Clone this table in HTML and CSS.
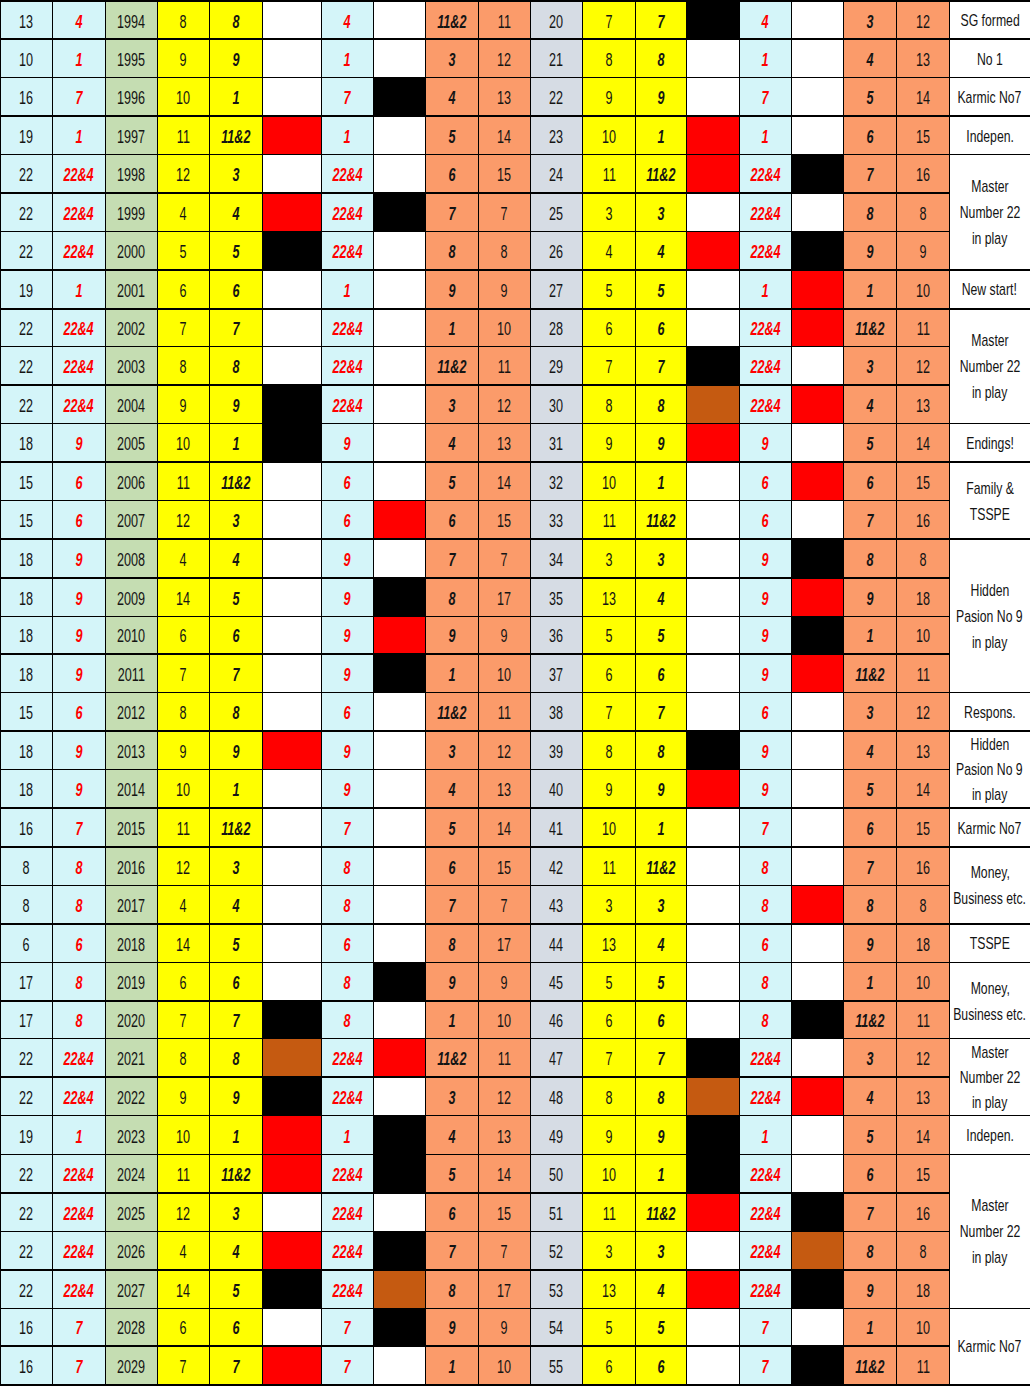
FILE: index.html
```html
<!DOCTYPE html>
<html>
<head>
<meta charset="utf-8">
<title>Numbers sheet</title>
<link rel="stylesheet" href="styles.css">
</head>
<body>
<table class="sheet">
<colgroup>
<col style="width:52px"><col style="width:53px"><col style="width:52px"><col style="width:52px"><col style="width:53px"><col style="width:59px"><col style="width:52px"><col style="width:52px"><col style="width:53px"><col style="width:52px"><col style="width:52px"><col style="width:53px"><col style="width:51px"><col style="width:53px"><col style="width:52px"><col style="width:52px"><col style="width:53px"><col style="width:53px"><col style="width:81px">
</colgroup>
<tbody>
<tr><td><span>13</span></td><td><span>4</span></td><td><span>1994</span></td><td><span>8</span></td><td><span>8</span></td><td></td><td><span>4</span></td><td></td><td><span>11&amp;2</span></td><td><span>11</span></td><td><span>20</span></td><td><span>7</span></td><td><span>7</span></td><td class="k"></td><td><span>4</span></td><td></td><td><span>3</span></td><td><span>12</span></td><td class="n"><div class="nt"><span>SG formed</span></div></td></tr>
<tr class="tk"><td><span>10</span></td><td><span>1</span></td><td><span>1995</span></td><td><span>9</span></td><td><span>9</span></td><td></td><td><span>1</span></td><td></td><td><span>3</span></td><td><span>12</span></td><td><span>21</span></td><td><span>8</span></td><td><span>8</span></td><td></td><td><span>1</span></td><td></td><td><span>4</span></td><td><span>13</span></td><td class="n"><div class="nt"><span>No 1</span></div></td></tr>
<tr><td><span>16</span></td><td><span>7</span></td><td><span>1996</span></td><td><span>10</span></td><td><span>1</span></td><td></td><td><span>7</span></td><td class="k"></td><td><span>4</span></td><td><span>13</span></td><td><span>22</span></td><td><span>9</span></td><td><span>9</span></td><td></td><td><span>7</span></td><td></td><td><span>5</span></td><td><span>14</span></td><td class="n"><div class="nt"><span>Karmic No7</span></div></td></tr>
<tr class="tk"><td><span>19</span></td><td><span>1</span></td><td><span>1997</span></td><td><span>11</span></td><td><span>11&amp;2</span></td><td class="rd"></td><td><span>1</span></td><td></td><td><span>5</span></td><td><span>14</span></td><td><span>23</span></td><td><span>10</span></td><td><span>1</span></td><td class="rd"></td><td><span>1</span></td><td></td><td><span>6</span></td><td><span>15</span></td><td class="n"><div class="nt"><span>Indepen.</span></div></td></tr>
<tr><td><span>22</span></td><td><span>22&amp;4</span></td><td><span>1998</span></td><td><span>12</span></td><td><span>3</span></td><td></td><td><span>22&amp;4</span></td><td></td><td><span>6</span></td><td><span>15</span></td><td><span>24</span></td><td><span>11</span></td><td><span>11&amp;2</span></td><td class="rd"></td><td><span>22&amp;4</span></td><td class="k"></td><td><span>7</span></td><td><span>16</span></td><td class="n" rowspan="3"><div class="nt"><span>Master</span><span>Number 22</span><span>in play</span></div></td></tr>
<tr class="tk"><td><span>22</span></td><td><span>22&amp;4</span></td><td><span>1999</span></td><td><span>4</span></td><td><span>4</span></td><td class="rd"></td><td><span>22&amp;4</span></td><td class="k"></td><td><span>7</span></td><td><span>7</span></td><td><span>25</span></td><td><span>3</span></td><td><span>3</span></td><td></td><td><span>22&amp;4</span></td><td></td><td><span>8</span></td><td><span>8</span></td></tr>
<tr><td><span>22</span></td><td><span>22&amp;4</span></td><td><span>2000</span></td><td><span>5</span></td><td><span>5</span></td><td class="k"></td><td><span>22&amp;4</span></td><td></td><td><span>8</span></td><td><span>8</span></td><td><span>26</span></td><td><span>4</span></td><td><span>4</span></td><td class="rd"></td><td><span>22&amp;4</span></td><td class="k"></td><td><span>9</span></td><td><span>9</span></td></tr>
<tr class="tk"><td><span>19</span></td><td><span>1</span></td><td><span>2001</span></td><td><span>6</span></td><td><span>6</span></td><td></td><td><span>1</span></td><td></td><td><span>9</span></td><td><span>9</span></td><td><span>27</span></td><td><span>5</span></td><td><span>5</span></td><td></td><td><span>1</span></td><td class="rd"></td><td><span>1</span></td><td><span>10</span></td><td class="n"><div class="nt"><span>New start!</span></div></td></tr>
<tr class="tk"><td><span>22</span></td><td><span>22&amp;4</span></td><td><span>2002</span></td><td><span>7</span></td><td><span>7</span></td><td></td><td><span>22&amp;4</span></td><td></td><td><span>1</span></td><td><span>10</span></td><td><span>28</span></td><td><span>6</span></td><td><span>6</span></td><td></td><td><span>22&amp;4</span></td><td class="rd"></td><td><span>11&amp;2</span></td><td><span>11</span></td><td class="n" rowspan="3"><div class="nt"><span>Master</span><span>Number 22</span><span>in play</span></div></td></tr>
<tr><td><span>22</span></td><td><span>22&amp;4</span></td><td><span>2003</span></td><td><span>8</span></td><td><span>8</span></td><td></td><td><span>22&amp;4</span></td><td></td><td><span>11&amp;2</span></td><td><span>11</span></td><td><span>29</span></td><td><span>7</span></td><td><span>7</span></td><td class="k"></td><td><span>22&amp;4</span></td><td></td><td><span>3</span></td><td><span>12</span></td></tr>
<tr class="tk"><td><span>22</span></td><td><span>22&amp;4</span></td><td><span>2004</span></td><td><span>9</span></td><td><span>9</span></td><td class="k"></td><td><span>22&amp;4</span></td><td></td><td><span>3</span></td><td><span>12</span></td><td><span>30</span></td><td><span>8</span></td><td><span>8</span></td><td class="bn"></td><td><span>22&amp;4</span></td><td class="rd"></td><td><span>4</span></td><td><span>13</span></td></tr>
<tr><td><span>18</span></td><td><span>9</span></td><td><span>2005</span></td><td><span>10</span></td><td><span>1</span></td><td class="k"></td><td><span>9</span></td><td></td><td><span>4</span></td><td><span>13</span></td><td><span>31</span></td><td><span>9</span></td><td><span>9</span></td><td class="rd"></td><td><span>9</span></td><td></td><td><span>5</span></td><td><span>14</span></td><td class="n"><div class="nt"><span>Endings!</span></div></td></tr>
<tr class="tk"><td><span>15</span></td><td><span>6</span></td><td><span>2006</span></td><td><span>11</span></td><td><span>11&amp;2</span></td><td></td><td><span>6</span></td><td></td><td><span>5</span></td><td><span>14</span></td><td><span>32</span></td><td><span>10</span></td><td><span>1</span></td><td></td><td><span>6</span></td><td class="rd"></td><td><span>6</span></td><td><span>15</span></td><td class="n" rowspan="2"><div class="nt"><span>Family &amp;</span><span>TSSPE</span></div></td></tr>
<tr><td><span>15</span></td><td><span>6</span></td><td><span>2007</span></td><td><span>12</span></td><td><span>3</span></td><td></td><td><span>6</span></td><td class="rd"></td><td><span>6</span></td><td><span>15</span></td><td><span>33</span></td><td><span>11</span></td><td><span>11&amp;2</span></td><td></td><td><span>6</span></td><td></td><td><span>7</span></td><td><span>16</span></td></tr>
<tr class="tk"><td><span>18</span></td><td><span>9</span></td><td><span>2008</span></td><td><span>4</span></td><td><span>4</span></td><td></td><td><span>9</span></td><td></td><td><span>7</span></td><td><span>7</span></td><td><span>34</span></td><td><span>3</span></td><td><span>3</span></td><td></td><td><span>9</span></td><td class="k"></td><td><span>8</span></td><td><span>8</span></td><td class="n" rowspan="4"><div class="nt"><span>Hidden</span><span>Pasion No 9</span><span>in play</span></div></td></tr>
<tr class="tk"><td><span>18</span></td><td><span>9</span></td><td><span>2009</span></td><td><span>14</span></td><td><span>5</span></td><td></td><td><span>9</span></td><td class="k"></td><td><span>8</span></td><td><span>17</span></td><td><span>35</span></td><td><span>13</span></td><td><span>4</span></td><td></td><td><span>9</span></td><td class="rd"></td><td><span>9</span></td><td><span>18</span></td></tr>
<tr><td><span>18</span></td><td><span>9</span></td><td><span>2010</span></td><td><span>6</span></td><td><span>6</span></td><td></td><td><span>9</span></td><td class="rd"></td><td><span>9</span></td><td><span>9</span></td><td><span>36</span></td><td><span>5</span></td><td><span>5</span></td><td></td><td><span>9</span></td><td class="k"></td><td><span>1</span></td><td><span>10</span></td></tr>
<tr class="tk"><td><span>18</span></td><td><span>9</span></td><td><span>2011</span></td><td><span>7</span></td><td><span>7</span></td><td></td><td><span>9</span></td><td class="k"></td><td><span>1</span></td><td><span>10</span></td><td><span>37</span></td><td><span>6</span></td><td><span>6</span></td><td></td><td><span>9</span></td><td class="rd"></td><td><span>11&amp;2</span></td><td><span>11</span></td></tr>
<tr><td><span>15</span></td><td><span>6</span></td><td><span>2012</span></td><td><span>8</span></td><td><span>8</span></td><td></td><td><span>6</span></td><td></td><td><span>11&amp;2</span></td><td><span>11</span></td><td><span>38</span></td><td><span>7</span></td><td><span>7</span></td><td></td><td><span>6</span></td><td></td><td><span>3</span></td><td><span>12</span></td><td class="n"><div class="nt"><span>Respons.</span></div></td></tr>
<tr class="tk"><td><span>18</span></td><td><span>9</span></td><td><span>2013</span></td><td><span>9</span></td><td><span>9</span></td><td class="rd"></td><td><span>9</span></td><td></td><td><span>3</span></td><td><span>12</span></td><td><span>39</span></td><td><span>8</span></td><td><span>8</span></td><td class="k"></td><td><span>9</span></td><td></td><td><span>4</span></td><td><span>13</span></td><td class="n tight" rowspan="2"><div class="nt"><span>Hidden</span><span>Pasion No 9</span><span>in play</span></div></td></tr>
<tr><td><span>18</span></td><td><span>9</span></td><td><span>2014</span></td><td><span>10</span></td><td><span>1</span></td><td></td><td><span>9</span></td><td></td><td><span>4</span></td><td><span>13</span></td><td><span>40</span></td><td><span>9</span></td><td><span>9</span></td><td class="rd"></td><td><span>9</span></td><td></td><td><span>5</span></td><td><span>14</span></td></tr>
<tr class="tk"><td><span>16</span></td><td><span>7</span></td><td><span>2015</span></td><td><span>11</span></td><td><span>11&amp;2</span></td><td></td><td><span>7</span></td><td></td><td><span>5</span></td><td><span>14</span></td><td><span>41</span></td><td><span>10</span></td><td><span>1</span></td><td></td><td><span>7</span></td><td></td><td><span>6</span></td><td><span>15</span></td><td class="n"><div class="nt"><span>Karmic No7</span></div></td></tr>
<tr class="tk"><td><span>8</span></td><td><span>8</span></td><td><span>2016</span></td><td><span>12</span></td><td><span>3</span></td><td></td><td><span>8</span></td><td></td><td><span>6</span></td><td><span>15</span></td><td><span>42</span></td><td><span>11</span></td><td><span>11&amp;2</span></td><td></td><td><span>8</span></td><td></td><td><span>7</span></td><td><span>16</span></td><td class="n" rowspan="2"><div class="nt"><span>Money,</span><span>Business etc.</span></div></td></tr>
<tr><td><span>8</span></td><td><span>8</span></td><td><span>2017</span></td><td><span>4</span></td><td><span>4</span></td><td></td><td><span>8</span></td><td></td><td><span>7</span></td><td><span>7</span></td><td><span>43</span></td><td><span>3</span></td><td><span>3</span></td><td></td><td><span>8</span></td><td class="rd"></td><td><span>8</span></td><td><span>8</span></td></tr>
<tr class="tk"><td><span>6</span></td><td><span>6</span></td><td><span>2018</span></td><td><span>14</span></td><td><span>5</span></td><td></td><td><span>6</span></td><td></td><td><span>8</span></td><td><span>17</span></td><td><span>44</span></td><td><span>13</span></td><td><span>4</span></td><td></td><td><span>6</span></td><td></td><td><span>9</span></td><td><span>18</span></td><td class="n"><div class="nt"><span>TSSPE</span></div></td></tr>
<tr><td><span>17</span></td><td><span>8</span></td><td><span>2019</span></td><td><span>6</span></td><td><span>6</span></td><td></td><td><span>8</span></td><td class="k"></td><td><span>9</span></td><td><span>9</span></td><td><span>45</span></td><td><span>5</span></td><td><span>5</span></td><td></td><td><span>8</span></td><td></td><td><span>1</span></td><td><span>10</span></td><td class="n" rowspan="2"><div class="nt"><span>Money,</span><span>Business etc.</span></div></td></tr>
<tr class="tk"><td><span>17</span></td><td><span>8</span></td><td><span>2020</span></td><td><span>7</span></td><td><span>7</span></td><td class="k"></td><td><span>8</span></td><td></td><td><span>1</span></td><td><span>10</span></td><td><span>46</span></td><td><span>6</span></td><td><span>6</span></td><td></td><td><span>8</span></td><td class="k"></td><td><span>11&amp;2</span></td><td><span>11</span></td></tr>
<tr><td><span>22</span></td><td><span>22&amp;4</span></td><td><span>2021</span></td><td><span>8</span></td><td><span>8</span></td><td class="bn"></td><td><span>22&amp;4</span></td><td class="rd"></td><td><span>11&amp;2</span></td><td><span>11</span></td><td><span>47</span></td><td><span>7</span></td><td><span>7</span></td><td class="k"></td><td><span>22&amp;4</span></td><td></td><td><span>3</span></td><td><span>12</span></td><td class="n tight" rowspan="2"><div class="nt"><span>Master</span><span>Number 22</span><span>in play</span></div></td></tr>
<tr class="tk"><td><span>22</span></td><td><span>22&amp;4</span></td><td><span>2022</span></td><td><span>9</span></td><td><span>9</span></td><td class="k"></td><td><span>22&amp;4</span></td><td></td><td><span>3</span></td><td><span>12</span></td><td><span>48</span></td><td><span>8</span></td><td><span>8</span></td><td class="bn"></td><td><span>22&amp;4</span></td><td class="rd"></td><td><span>4</span></td><td><span>13</span></td></tr>
<tr><td><span>19</span></td><td><span>1</span></td><td><span>2023</span></td><td><span>10</span></td><td><span>1</span></td><td class="rd"></td><td><span>1</span></td><td class="k"></td><td><span>4</span></td><td><span>13</span></td><td><span>49</span></td><td><span>9</span></td><td><span>9</span></td><td class="k"></td><td><span>1</span></td><td></td><td><span>5</span></td><td><span>14</span></td><td class="n"><div class="nt"><span>Indepen.</span></div></td></tr>
<tr><td><span>22</span></td><td><span>22&amp;4</span></td><td><span>2024</span></td><td><span>11</span></td><td><span>11&amp;2</span></td><td class="rd"></td><td><span>22&amp;4</span></td><td class="k"></td><td><span>5</span></td><td><span>14</span></td><td><span>50</span></td><td><span>10</span></td><td><span>1</span></td><td class="k"></td><td><span>22&amp;4</span></td><td></td><td><span>6</span></td><td><span>15</span></td><td class="n" rowspan="4"><div class="nt"><span>Master</span><span>Number 22</span><span>in play</span></div></td></tr>
<tr class="tk"><td><span>22</span></td><td><span>22&amp;4</span></td><td><span>2025</span></td><td><span>12</span></td><td><span>3</span></td><td></td><td><span>22&amp;4</span></td><td></td><td><span>6</span></td><td><span>15</span></td><td><span>51</span></td><td><span>11</span></td><td><span>11&amp;2</span></td><td class="rd"></td><td><span>22&amp;4</span></td><td class="k"></td><td><span>7</span></td><td><span>16</span></td></tr>
<tr><td><span>22</span></td><td><span>22&amp;4</span></td><td><span>2026</span></td><td><span>4</span></td><td><span>4</span></td><td class="rd"></td><td><span>22&amp;4</span></td><td class="k"></td><td><span>7</span></td><td><span>7</span></td><td><span>52</span></td><td><span>3</span></td><td><span>3</span></td><td></td><td><span>22&amp;4</span></td><td class="bn"></td><td><span>8</span></td><td><span>8</span></td></tr>
<tr class="tk"><td><span>22</span></td><td><span>22&amp;4</span></td><td><span>2027</span></td><td><span>14</span></td><td><span>5</span></td><td class="k"></td><td><span>22&amp;4</span></td><td class="bn"></td><td><span>8</span></td><td><span>17</span></td><td><span>53</span></td><td><span>13</span></td><td><span>4</span></td><td class="rd"></td><td><span>22&amp;4</span></td><td class="k"></td><td><span>9</span></td><td><span>18</span></td></tr>
<tr><td><span>16</span></td><td><span>7</span></td><td><span>2028</span></td><td><span>6</span></td><td><span>6</span></td><td></td><td><span>7</span></td><td class="k"></td><td><span>9</span></td><td><span>9</span></td><td><span>54</span></td><td><span>5</span></td><td><span>5</span></td><td></td><td><span>7</span></td><td></td><td><span>1</span></td><td><span>10</span></td><td class="n end" rowspan="2"><div class="nt"><span>Karmic No7</span></div></td></tr>
<tr class="tk"><td><span>16</span></td><td><span>7</span></td><td><span>2029</span></td><td><span>7</span></td><td><span>7</span></td><td class="rd"></td><td><span>7</span></td><td></td><td><span>1</span></td><td><span>10</span></td><td><span>55</span></td><td><span>6</span></td><td><span>6</span></td><td></td><td><span>7</span></td><td class="k"></td><td><span>11&amp;2</span></td><td><span>11</span></td></tr>
</tbody>
</table>
</body>
</html>
```
FILE: styles.css
```css
html, body {
  margin: 0;
  padding: 0;
  background: #ffffff;
}

body {
  width: 1030px;
  height: 1386px;
  overflow: hidden;
}

.sheet {
  border-collapse: collapse;
  table-layout: fixed;
  width: 1030px;
  font-family: "Liberation Sans", Arial, sans-serif;
  font-size: 18px;
  color: #141414;
}

.sheet tr {
  height: 38.44px;
}

.sheet td {
  border: 1px solid #000;
  padding: 4px 0 0 0;
  text-align: center;
  vertical-align: middle;
  background: #ffffff;
  overflow: visible;
}

.sheet tr:first-child td,
.sheet tr.tk td {
  border-top-width: 2px;
}

.sheet tr:last-child td,
.sheet td.end {
  border-bottom-width: 2px;
}

.sheet span {
  display: inline-block;
  white-space: nowrap;
  transform: scaleX(0.7);
}

/* column colours */
.sheet td:nth-child(1),
.sheet td:nth-child(2),
.sheet td:nth-child(7),
.sheet td:nth-child(15) {
  background: #d4f5f9;
}

.sheet td:nth-child(3) {
  background: #c5ddb2;
}

.sheet td:nth-child(4),
.sheet td:nth-child(5),
.sheet td:nth-child(12),
.sheet td:nth-child(13) {
  background: #ffff00;
}

.sheet td:nth-child(9),
.sheet td:nth-child(10),
.sheet td:nth-child(17),
.sheet td:nth-child(18) {
  background: #fb9b6a;
}

.sheet td:nth-child(11) {
  background: #d6dce4;
}

/* emphasised columns */
.sheet td:nth-child(2),
.sheet td:nth-child(5),
.sheet td:nth-child(7),
.sheet td:nth-child(9),
.sheet td:nth-child(13),
.sheet td:nth-child(15),
.sheet td:nth-child(17) {
  font-weight: bold;
  font-style: italic;
}

.sheet td:nth-child(2),
.sheet td:nth-child(7),
.sheet td:nth-child(15) {
  color: #ff0000;
}

/* colour blocks */
.sheet td.k {
  background: #000000;
}

.sheet td.rd {
  background: #ff0000;
}

.sheet td.bn {
  background: #c55a11;
}

/* notes column */
.sheet td.n {
  background: #ffffff;
  font-size: 17px;
  line-height: 26px;
  font-weight: normal;
  font-style: normal;
  color: #141414;
  border-right-width: 2px;
  padding: 2px 0 0 0;
}

.sheet td.n.tight {
  line-height: 25px;
  padding: 0;
}

.nt {
  display: flex;
  flex-direction: column;
  align-items: center;
}

.sheet td.n span {
  transform: scaleX(0.72);
}
```
